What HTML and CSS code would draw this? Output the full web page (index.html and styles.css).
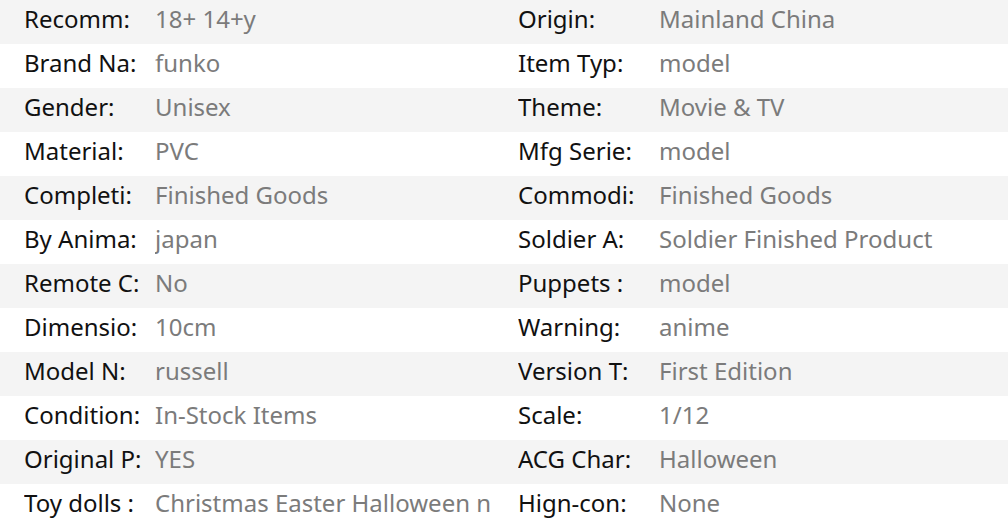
FILE: index.html
```html
<!DOCTYPE html>
<html>
<head>
<meta charset="utf-8">
<link rel="stylesheet" href="styles.css">
</head>
<body>
<div class="table">
  <div class="row"><span class="lbl">Recomm:</span><span class="val">18+ 14+y</span><span class="lbl">Origin:</span><span class="val">Mainland China</span></div>
  <div class="row"><span class="lbl">Brand Na:</span><span class="val">funko</span><span class="lbl">Item Typ:</span><span class="val">model</span></div>
  <div class="row"><span class="lbl">Gender:</span><span class="val">Unisex</span><span class="lbl">Theme:</span><span class="val">Movie &amp; TV</span></div>
  <div class="row"><span class="lbl">Material:</span><span class="val">PVC</span><span class="lbl">Mfg Serie:</span><span class="val">model</span></div>
  <div class="row"><span class="lbl">Completi:</span><span class="val">Finished Goods</span><span class="lbl">Commodi:</span><span class="val">Finished Goods</span></div>
  <div class="row"><span class="lbl">By Anima:</span><span class="val">japan</span><span class="lbl">Soldier A:</span><span class="val">Soldier Finished Product</span></div>
  <div class="row"><span class="lbl">Remote C:</span><span class="val">No</span><span class="lbl">Puppets :</span><span class="val">model</span></div>
  <div class="row"><span class="lbl">Dimensio:</span><span class="val">10cm</span><span class="lbl">Warning:</span><span class="val">anime</span></div>
  <div class="row"><span class="lbl">Model N:</span><span class="val">russell</span><span class="lbl">Version T:</span><span class="val">First Edition</span></div>
  <div class="row"><span class="lbl">Condition:</span><span class="val">In-Stock Items</span><span class="lbl">Scale:</span><span class="val">1/12</span></div>
  <div class="row"><span class="lbl">Original P:</span><span class="val">YES</span><span class="lbl">ACG Char:</span><span class="val">Halloween</span></div>
  <div class="row"><span class="lbl">Toy dolls :</span><span class="val">Christmas Easter Halloween n</span><span class="lbl">Hign-con:</span><span class="val">None</span></div>
</div>
</body>
</html>
```

FILE: styles.css
```css
html, body {
  margin: 0;
  padding: 0;
  background: #ffffff;
}
body {
  font-family: "Noto Sans", "Open Sans", sans-serif;
  font-size: 24px;
  width: 1008px;
  height: 528px;
  overflow: hidden;
}
.table {
  display: flex;
  flex-direction: column;
}
.row {
  display: grid;
  grid-template-columns: 131px 363px 141px 1fr;
  height: 44px;
  line-height: 38px;
  padding-left: 24px;
  white-space: nowrap;
}
.row:nth-child(odd) {
  background: #f4f4f4;
}
.lbl {
  color: #111111;
  overflow: hidden;
}
.val {
  color: #7b7b7b;
  overflow: hidden;
}
```
